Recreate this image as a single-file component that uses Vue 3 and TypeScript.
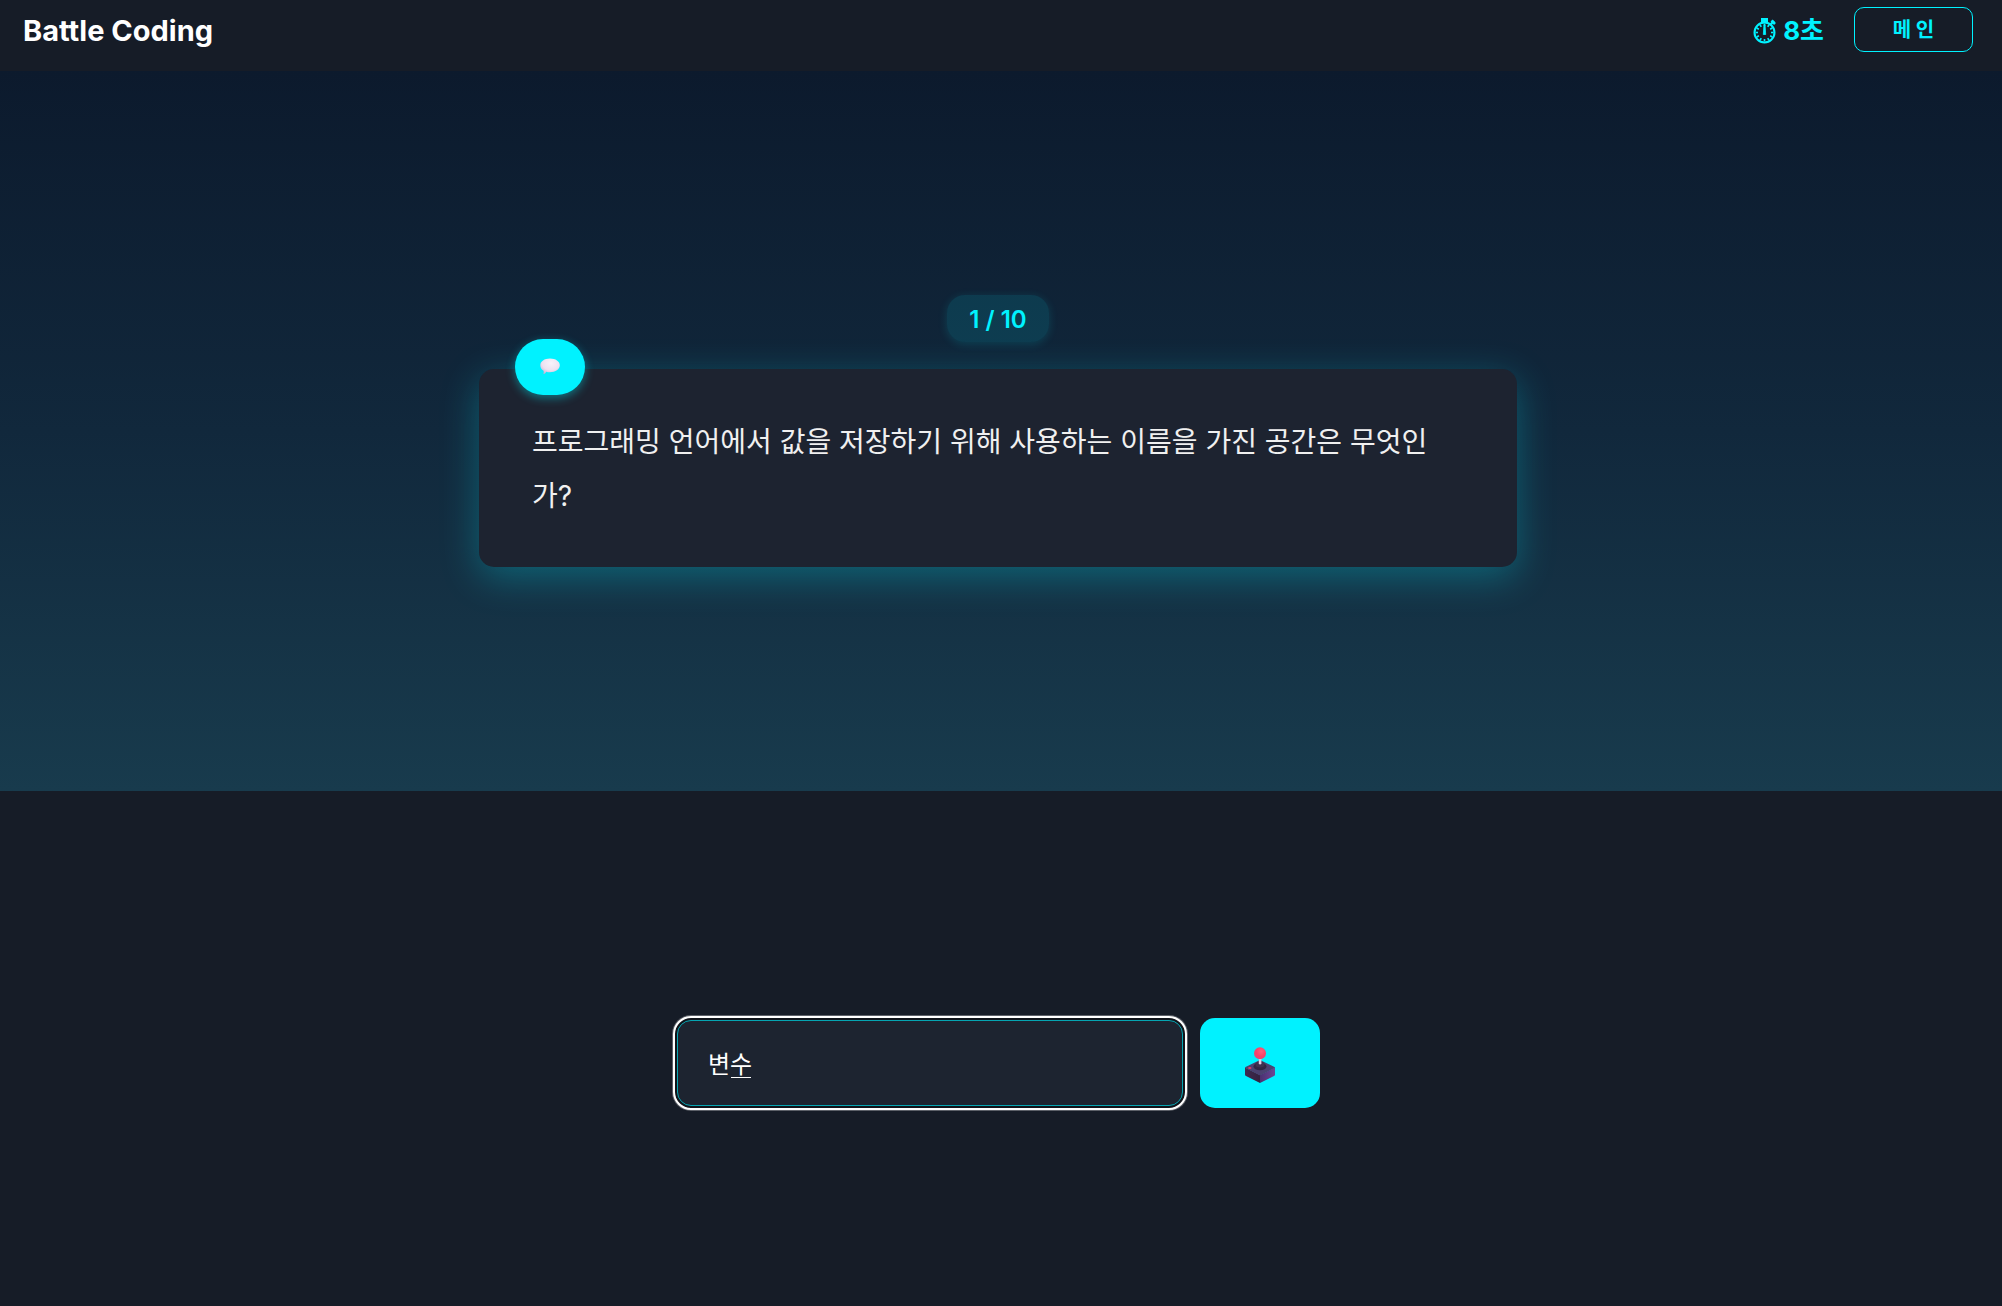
<script setup lang="ts">
import { ref } from 'vue'

const answer = ref<string>('변수')
const secondsLeft = ref<number>(8)
const current = 1
const total = 10
const question = '프로그래밍 언어에서 값을 저장하기 위해 사용하는 이름을 가진 공간은 무엇인가?'
const ticks = Array.from({ length: 12 }, (_, i) => i * 30)
</script>

<template>
  <div class="page">
    <header class="topbar">
      <h1 class="brand">Battle Coding</h1>
      <div class="status">
        <p class="timer">
          <svg class="watch" viewBox="0 0 24 26" aria-hidden="true">
            <circle cx="11.5" cy="14.5" r="10" fill="none" stroke="currentColor" stroke-width="2" />
            <path d="M8 0h7v4H8z" fill="currentColor" />
            <path d="M17.5 6.5l3.5-3.5" stroke="currentColor" stroke-width="2.4" />
            <path d="M18.5 2.5l3.5 3.5" stroke="currentColor" stroke-width="2.6" />
            <path d="M10.3 16.5L11 6.5h1l.7 10z" fill="currentColor" stroke="currentColor" stroke-width=".8" />
            <path
              v-for="deg in ticks"
              :key="deg"
              d="M11.5 5.500v2.500"
              :transform="`rotate(${deg} 11.5 14.5)`"
              stroke="currentColor"
              stroke-width="1.600"
            />
          </svg>
          <span>{{ secondsLeft }}초</span>
        </p>
        <button class="main-button" type="button">메 인</button>
      </div>
    </header>

    <main class="stage">
      <p class="progress">{{ current }} / {{ total }}</p>
      <section class="card">
        <span class="bubble">
          <svg viewBox="0 0 20 17" width="20" height="17" aria-hidden="true">
            <defs>
              <radialGradient id="bubble-fill" cx=".55" cy=".3" r=".75">
                <stop offset="0" stop-color="#f8f2fa" />
                <stop offset=".6" stop-color="#ece2f1" />
                <stop offset="1" stop-color="#c9b1d6" />
              </radialGradient>
            </defs>
            <path
              d="M10 .5c5.600 0 9.800 2.800 9.800 6.800s-4.200 6.900-9.800 6.900c-1.400 0-2.700-.1-3.800-.5-.5.900-1.300 2-2.300 2.400-.4.100-.6-.2-.4-.6.300-.8.300-1.700.1-2.700C1.500 11.500.3 9.600.3 7.300.3 3.300 4.400.5 10 .5z"
              fill="url(#bubble-fill)"
            />
          </svg>
        </span>
        <p class="question">{{ question }}</p>
      </section>
    </main>

    <footer class="answer-area">
      <form class="answer-form" @submit.prevent>
        <div class="field">
          <input v-model="answer" class="answer" type="text" aria-label="정답" autocomplete="off" />
          <span class="composing"></span>
        </div>
        <button class="submit" type="submit" aria-label="제출">
          <svg viewBox="0 0 30 36" width="30" height="36" aria-hidden="true">
            <defs>
              <linearGradient id="left-side" x1="0" y1="0" x2="1" y2="0">
                <stop offset="0" stop-color="#3d2c50" />
                <stop offset="1" stop-color="#35213f" />
              </linearGradient>
              <linearGradient id="right-side" x1="0" y1="0" x2="1" y2="0">
                <stop offset="0" stop-color="#4a3070" />
                <stop offset="1" stop-color="#6b4794" />
              </linearGradient>
              <radialGradient id="knob" cx=".6" cy=".35" r=".7">
                <stop offset="0" stop-color="#ff5f7d" />
                <stop offset=".6" stop-color="#fb4168" />
                <stop offset="1" stop-color="#e04a7c" />
              </radialGradient>
            </defs>
            <path d="M0 20.500L15 28v8L1 29q-1-.5-1-1.500z" fill="url(#left-side)" />
            <path d="M30 20.500L15 28v8l14-7q1-.5 1-1.500z" fill="url(#right-side)" />
            <path d="M.5 20L14 13.500q1-.5 2 0L29.500 20q.8.500 0 1L16 28q-1 .5-2 0L.5 21q-.8-.5 0-1z" fill="#4b4170" />
            <ellipse cx="15" cy="19.500" rx="6.500" ry="3.800" fill="#322543" />
            <ellipse cx="15" cy="17.500" rx="4.500" ry="3" fill="#40304f" />
            <path d="M13.800 11h2.600v6q-1.300.8-2.600 0z" fill="#dfd2e8" />
            <circle cx="15" cy="6.200" r="6" fill="url(#knob)" />
            <ellipse cx="4.800" cy="21" rx="1.700" ry="1.100" fill="#e23a62" />
          </svg>
        </button>
      </form>
    </footer>
  </div>
</template>

<style>
body {
  margin: 0;
  background: #161c27;
}
</style>

<style scoped>
.page {
  display: flex;
  flex-direction: column;
  min-height: 100vh;
  font-family: Inter, 'Noto Sans CJK KR', sans-serif;
  color: #fff;
  background: #161c27;
}

.page * {
  box-sizing: border-box;
}

.topbar {
  display: flex;
  align-items: flex-start;
  justify-content: space-between;
  padding: 7px 29px 17px 23px;
}

.brand {
  margin: 0;
  font-size: 29px;
  line-height: 47px;
  font-weight: 700;
}

.status {
  display: flex;
  align-items: flex-start;
  gap: 30px;
}

.timer {
  display: flex;
  align-items: center;
  gap: 6px;
  margin: 0;
  color: #00f2ff;
  font-size: 26px;
  line-height: 47px;
  font-weight: 700;
}

.watch {
  width: 24px;
  height: 26px;
}

.main-button {
  width: 119px;
  height: 45px;
  padding: 0;
  border: 1px solid #00f2ff;
  border-radius: 10px;
  background: transparent;
  color: #00f2ff;
  font-family: inherit;
  font-size: 20px;
  line-height: 24px;
  font-weight: 700;
}

.stage {
  flex: 7 1 0;
  display: flex;
  flex-direction: column;
  align-items: center;
  justify-content: center;
  gap: 27px;
  padding-right: 6px;
  background: linear-gradient(180deg, #0c1a2d 0%, #11283c 50%, #183b4d 100%);
}

.progress {
  margin: 0;
  padding: 9px 22px 7px;
  border-radius: 18px;
  background: rgba(0, 242, 255, 0.12);
  box-shadow: 0 2px 10px rgba(0, 242, 255, 0.15);
  color: #00f2ff;
  font-size: 24px;
  line-height: 31px;
  font-weight: 600;
}

.card {
  position: relative;
  width: 52%;
  padding: 46px 53px 44px;
  border-radius: 15px;
  background: #1d2330;
  box-shadow: 0 10px 38px rgba(0, 242, 255, 0.28);
}

.bubble {
  position: absolute;
  top: -30px;
  left: 36px;
  display: flex;
  align-items: center;
  justify-content: center;
  width: 70px;
  height: 56px;
  padding-bottom: 2px;
  border-radius: 28px;
  background: #00f2ff;
  box-shadow: 0 3px 10px rgba(0, 242, 255, 0.4);
}

.question {
  margin: 0;
  color: #f0f0f0;
  font-size: 28px;
  line-height: 54px;
}

.answer-area {
  flex: 5 1 0;
  display: flex;
  align-items: center;
  justify-content: center;
  padding-right: 5px;
}

.answer-form {
  display: flex;
  align-items: center;
  gap: 17px;
  width: 100%;
  max-width: 643px;
  margin-top: 29px;
}

.field {
  position: relative;
  flex: 1;
  display: flex;
}

.answer {
  width: 100%;
  height: 86px;
  padding: 0 30px 2px;
  border: 1px solid #05a5b2;
  border-radius: 14px;
  outline: 2px solid #fff;
  outline-offset: 2px;
  background: #1d2430;
  box-shadow: 0 0 0 2px #10141a, 0 0 0 5px rgba(255, 255, 255, 0.3);
  color: #fff;
  font-family: inherit;
  font-size: 24px;
  line-height: 32px;
}

.composing {
  position: absolute;
  top: 57px;
  left: 54px;
  width: 20px;
  height: 1px;
  background: #fff;
}

.submit {
  display: flex;
  align-items: center;
  justify-content: center;
  width: 120px;
  height: 90px;
  padding: 4px 0 0;
  border: 0;
  border-radius: 15px;
  background: #00f2ff;
}
</style>
